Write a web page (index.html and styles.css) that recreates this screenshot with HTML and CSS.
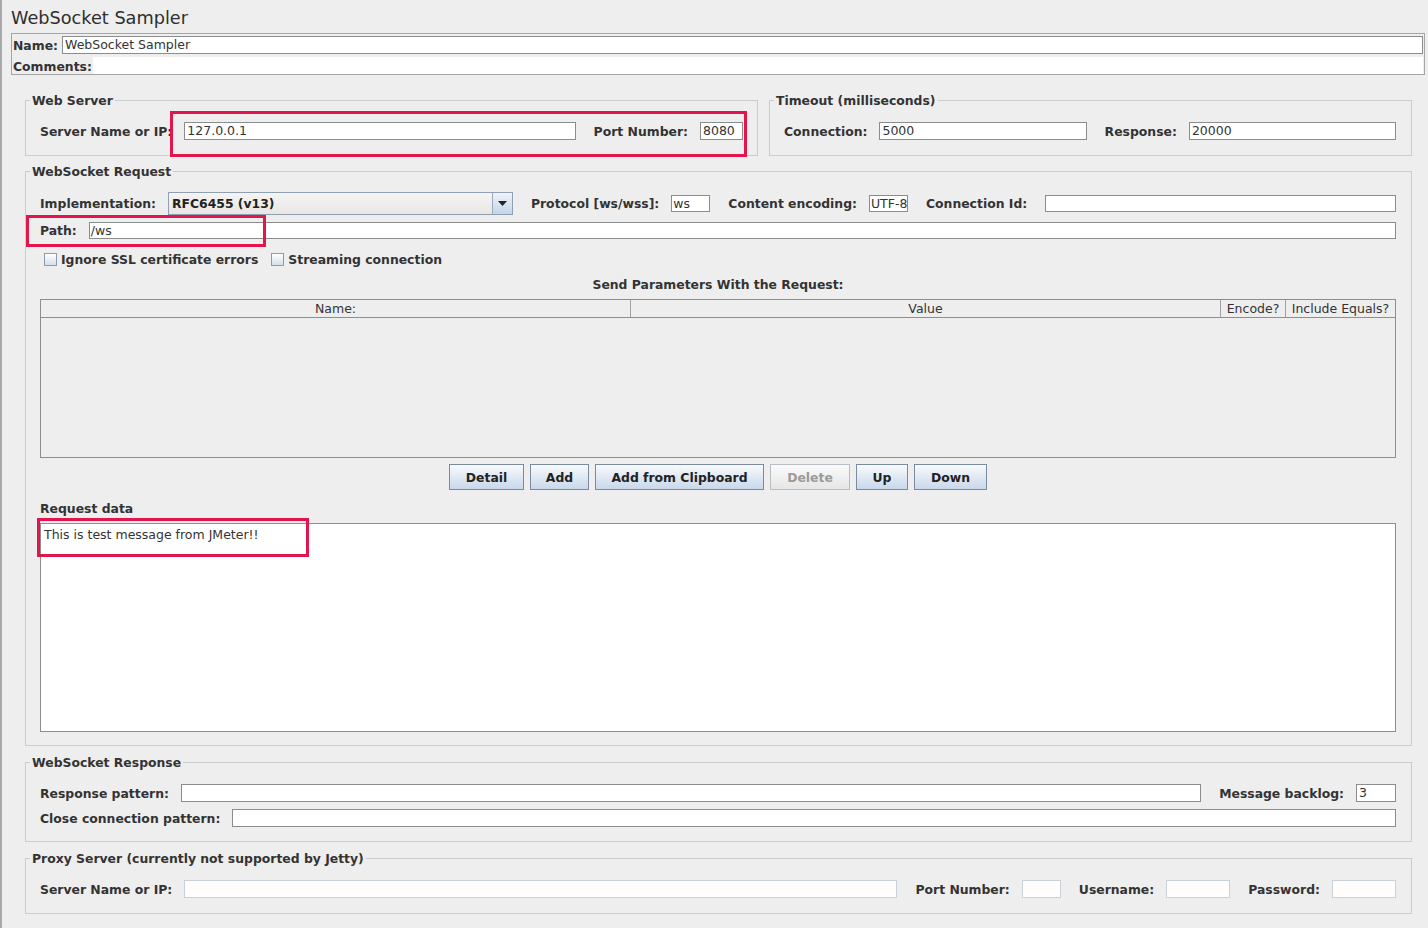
FILE: index.html
```html
<!DOCTYPE html>
<html>
<head>
<meta charset="utf-8">
<title>WebSocket Sampler</title>
<link rel="stylesheet" href="styles.css">
</head>
<body>
<div class="page">
  <div class="title">WebSocket Sampler</div>
  <div class="namebox">
    <div class="nrow"><span class="lbl nlbl">Name:</span><div class="inp grow">WebSocket Sampler</div></div>
    <div class="crow"><span class="lbl">Comments:</span><div class="carea"></div></div>
  </div>

  <div class="sections">
    <div class="toprow">
      <fieldset class="fs ws">
        <legend>Web Server</legend>
        <div class="row r24 top">
          <span class="lbl">Server Name or IP:</span><div class="inp grow">127.0.0.1</div>
          <span class="lbl ml">Port Number:</span><div class="inp w43">8080</div>
        </div>
      </fieldset>
      <fieldset class="fs to">
        <legend>Timeout (milliseconds)</legend>
        <div class="row r24 top">
          <span class="lbl">Connection:</span><div class="inp grow">5000</div>
          <span class="lbl ml">Response:</span><div class="inp grow">20000</div>
        </div>
      </fieldset>
    </div>

    <fieldset class="fs req">
      <legend>WebSocket Request</legend>
      <div class="row r24 impl">
        <span class="lbl">Implementation:</span>
        <div class="combo"><div class="combo-val">RFC6455 (v13)</div><div class="combo-btn"><svg width="9" height="5" viewBox="0 0 9 5"><path d="M0 0H9L4.5 5Z" fill="#222"/></svg></div></div>
        <span class="lbl ml">Protocol [ws/wss]:</span><div class="inp sm w39">ws</div>
        <span class="lbl ml">Content encoding:</span><div class="inp sm w39">UTF-8</div>
        <span class="lbl ml mr18">Connection Id:</span><div class="inp sm grow"></div>
      </div>
      <div class="row r18 path">
        <span class="lbl">Path:</span><div class="inp sm grow">/ws</div>
      </div>
      <div class="row chkrow">
        <span class="chk"></span><span class="lbl">Ignore SSL certificate errors</span>
        <span class="chk"></span><span class="lbl">Streaming connection</span>
      </div>
      <div class="sendtitle lbl">Send Parameters With the Request:</div>
      <div class="tbl">
        <div class="thead">
          <div class="th c-name">Name:</div>
          <div class="th c-val">Value</div>
          <div class="th c-enc">Encode?</div>
          <div class="th c-inc">Include Equals?</div>
        </div>
      </div>
      <div class="btnrow">
        <button class="btn b-detail">Detail</button>
        <button class="btn b-add">Add</button>
        <button class="btn b-clip">Add from Clipboard</button>
        <button class="btn b-del" disabled>Delete</button>
        <button class="btn b-up">Up</button>
        <button class="btn b-down">Down</button>
      </div>
      <div class="lbl rdlbl">Request data</div>
      <div class="textarea">This is test message from JMeter!!</div>
    </fieldset>

    <fieldset class="fs resp">
      <legend>WebSocket Response</legend>
      <div class="row r18 first">
        <span class="lbl">Response pattern:</span><div class="inp grow"></div>
        <span class="lbl ml">Message backlog:</span><div class="inp w40">3</div>
      </div>
      <div class="row r18 second">
        <span class="lbl">Close connection pattern:</span><div class="inp grow"></div>
      </div>
    </fieldset>

    <fieldset class="fs proxy">
      <legend>Proxy Server (currently not supported by Jetty)</legend>
      <div class="row r18 first">
        <span class="lbl">Server Name or IP:</span><div class="inp light grow"></div>
        <span class="lbl ml">Port Number:</span><div class="inp light w39"></div>
        <span class="lbl ml">Username:</span><div class="inp light w64"></div>
        <span class="lbl ml">Password:</span><div class="inp light w64"></div>
      </div>
    </fieldset>
  </div>

  <div class="hl hl1"></div>
  <div class="hl hl2"></div>
  <div class="hl hl3"></div>
</div>
</body>
</html>
```

FILE: styles.css
```css
* { box-sizing: border-box; }
html, body { margin: 0; padding: 0; }
body {
  background: #eeeeee;
  font-family: "DejaVu Sans", "Liberation Sans", sans-serif;
  color: #333;
}
.page {
  position: relative;
  height: 928px;
  border-left: 2px solid #a8a8a8;
  padding: 8px 0 0 9px;
  overflow: hidden;
}
.title {
  font-size: 17.7px;
  line-height: 20px;
  height: 20px;
  color: #2e2e2e;
}
.namebox {
  margin: 5px 3px 0 0;
  border: 1px solid #a5a5a5;
  padding: 1px 1px 0 1px;
}
.nrow { display: flex; align-items: center; height: 19px; }
.nlbl { margin-right: 4px; }
.crow { display: flex; align-items: center; height: 17px; margin-top: 3px; }
.carea { flex: 1; height: 17px; background: #fff; margin-left: 1px; }

.lbl {
  font-weight: bold;
  font-size: 12.4px;
  line-height: 16px;
  padding-top: 2px;
  white-space: nowrap;
  color: #333;
}
.row .lbl { margin-right: 12px; }
.row .lbl.ml { margin-left: 18px; }
.row .lbl.mr18 { margin-right: 18px; }

.inp {
  height: 18px;
  background: #fff;
  border: 1px solid #8c8c8c;
  font-size: 12.5px;
  line-height: 16px;
  padding: 0 2px;
  white-space: nowrap;
  overflow: hidden;
  color: #333;
}
.inp.sm { height: 17px; line-height: 15px; padding: 0 1px; }
.inp.light { border-color: #c9d0d8; background: #fffefc; }
.grow { flex: 1; min-width: 0; }
.w39 { width: 39px; }
.w40 { width: 40px; }
.w43 { width: 43px; }
.w64 { width: 64px; }

.sections { margin: 16px 16px 0 14px; }
.toprow { display: flex; gap: 11px; }
.fs {
  margin: 0;
  min-width: 0;
  border: 1px solid #c9cdd1;
  padding: 0 15px 12px 14px;
}
.fs legend {
  font-weight: bold;
  font-size: 12.4px;
  line-height: 16px;
  padding: 2px 2px 0;
  margin-left: -10px;
  color: #333;
}
.ws { width: 733px; flex: none; padding-right: 14px; }
.to { flex: 1; }
.row { display: flex; align-items: center; }
.r24 { height: 24px; }
.r18 { height: 18px; }
.top { margin-top: 10px; }

.req { margin-top: 6px; padding-bottom: 13px; }
.impl { margin-top: 11px; }
.path { margin-top: 6px; }
.combo {
  width: 345px;
  height: 23px;
  border: 1px solid #8fa0b3;
  display: flex;
  background: linear-gradient(#f5f4f3, #e8e7e5);
}
.combo-val {
  flex: 1;
  font-weight: bold;
  font-size: 12.4px;
  line-height: 21px;
  padding-left: 3px;
  color: #222;
}
.combo-btn {
  width: 20px;
  border-left: 1px solid #9aabbf;
  background: linear-gradient(#eef3f9, #c4d5e9);
  display: flex;
  align-items: center;
  justify-content: center;
}
.chkrow { height: 16px; margin-top: 12px; padding-left: 4px; }
.chk {
  width: 13px;
  height: 13px;
  border: 1px solid #8a9cb0;
  background: linear-gradient(#ffffff, #d5dfea);
  margin-right: 4px;
  flex: none;
}
.chkrow .lbl { margin-right: 13px; }
.sendtitle { text-align: center; margin-top: 8px; }
.tbl {
  margin-top: 6px;
  height: 159px;
  border: 1px solid #8e8e8e;
  background: #eeeeee;
}
.thead {
  display: flex;
  height: 18px;
  border-bottom: 1px solid #8e8e8e;
}
.th {
  font-size: 12.5px;
  line-height: 16px;
  padding-top: 1px;
  text-align: center;
  border-right: 1px solid #a0a0a0;
  color: #333;
  white-space: nowrap;
}
.c-name, .c-val { width: 590px; }
.c-enc { width: 65px; }
.c-inc { flex: 1; border-right: none; }

.btnrow {
  display: flex;
  justify-content: center;
  gap: 6px;
  margin-top: 6px;
}
.btn {
  height: 26px;
  padding: 0;
  border: 1px solid #7a8b9d;
  border-radius: 0;
  background: linear-gradient(#f8fafd, #c8d8eb);
  font-family: "DejaVu Sans", sans-serif;
  font-weight: bold;
  font-size: 12.4px;
  color: #222;
}
.btn:disabled {
  border-color: #b9bec4;
  background: linear-gradient(#fafafa, #e6e6e6);
  color: #9a9a9a;
}
.b-detail { width: 75px; }
.b-add { width: 59px; }
.b-clip { width: 169px; }
.b-del { width: 80px; }
.b-up { width: 52px; }
.b-down { width: 73px; }
.rdlbl { margin-top: 9px; }
.textarea {
  margin-top: 6px;
  height: 209px;
  background: #fff;
  border: 1px solid #8e8e8e;
  padding: 2px 3px;
  font-size: 12.5px;
  line-height: 18px;
  color: #333;
}

.resp { margin-top: 7px; padding-bottom: 14px; }
.resp .first { margin-top: 13px; }
.resp .second { margin-top: 7px; }
.proxy { margin-top: 7px; padding-bottom: 15px; }
.proxy .first { margin-top: 13px; }

.hl {
  position: absolute;
  border: 3px solid #e3154c;
  pointer-events: none;
}
.hl1 { left: 168px; top: 111px; width: 577px; height: 46px; }
.hl2 { left: 24px; top: 215px; width: 240px; height: 32px; }
.hl3 { left: 35px; top: 518px; width: 272px; height: 39px; }
```
